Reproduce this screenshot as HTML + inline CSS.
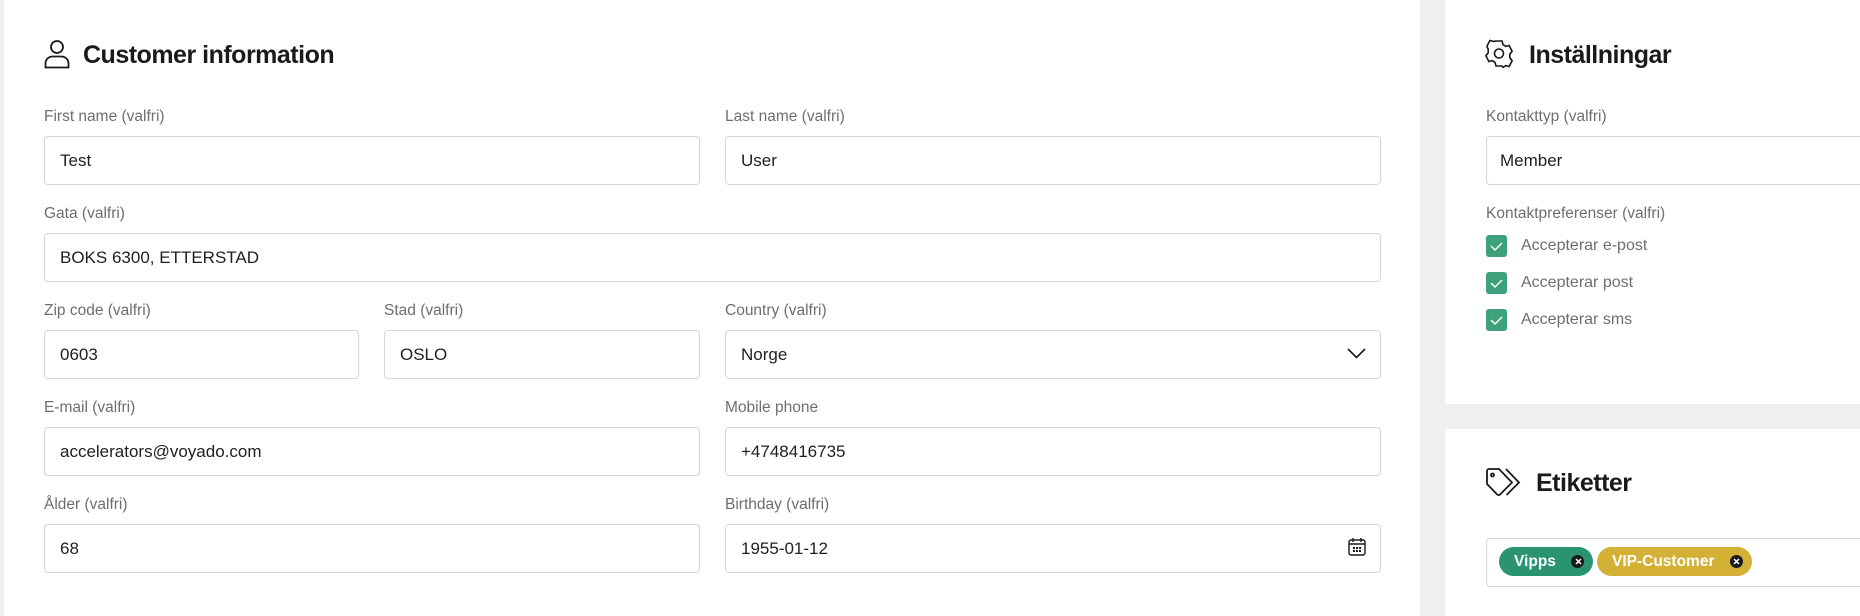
<!DOCTYPE html>
<html><head><meta charset="utf-8"><style>
*{box-sizing:border-box;margin:0;padding:0}
body{width:1860px;height:616px;background:#efefef;font-family:"Liberation Sans",sans-serif;position:relative;overflow:hidden;color:#1f1f1f}
.panel{position:absolute;background:#fff}
.abs{position:absolute}
.lbl{position:absolute;font-size:15.5px;color:#6e6e6e;line-height:18px}
.inp{position:absolute;height:49px;border:1px solid #d6d6d6;border-radius:4px;background:#fff;font-size:17px;line-height:47px;padding-left:15px;color:#1f1f1f}
.title{position:absolute;font-size:25px;font-weight:bold;letter-spacing:-0.5px;line-height:30px;color:#1a1a1a}
.cb{position:absolute;width:21px;height:22px;border-radius:3px;background:#3fa07c}
.cbt{position:absolute;font-size:16px;color:#6e6e6e;line-height:18px}
.tag{position:absolute;height:29px;border-radius:15px;color:#fff;font-weight:bold;font-size:15.5px;line-height:29px;padding-left:15px}
.x{position:absolute;right:9px;top:8px;width:13px;height:13px;border-radius:50%;background:#1a1a1a}
</style></head><body>
<div class="panel" style="left:4px;top:0;width:1416px;height:616px"></div>
<div class="panel" style="left:1445px;top:0;width:415px;height:404px"></div>
<div class="panel" style="left:1445px;top:429px;width:415px;height:187px"></div>

<svg class="abs" style="left:44px;top:40px" width="26" height="29" viewBox="0 0 26 29" fill="none" stroke="#1a1a1a" stroke-width="1.8"><circle cx="13" cy="7" r="6"/><path d="M1.5 27.5v-4a7 7 0 0 1 7-7h9a7 7 0 0 1 7 7v4z"/></svg>
<div class="title" style="left:83px;top:40px">Customer information</div>

<div class="lbl" style="left:44px;top:108px">First name (valfri)</div>
<div class="inp" style="left:44px;top:136px;width:656px">Test</div>
<div class="lbl" style="left:725px;top:108px">Last name (valfri)</div>
<div class="inp" style="left:725px;top:136px;width:656px">User</div>

<div class="lbl" style="left:44px;top:205px">Gata (valfri)</div>
<div class="inp" style="left:44px;top:233px;width:1337px">BOKS 6300, ETTERSTAD</div>

<div class="lbl" style="left:44px;top:302px">Zip code (valfri)</div>
<div class="inp" style="left:44px;top:330px;width:315px">0603</div>
<div class="lbl" style="left:384px;top:302px">Stad (valfri)</div>
<div class="inp" style="left:384px;top:330px;width:316px">OSLO</div>
<div class="lbl" style="left:725px;top:302px">Country (valfri)</div>
<div class="inp" style="left:725px;top:330px;width:656px">Norge</div>
<svg class="abs" style="left:1347px;top:348px" width="19" height="11" viewBox="0 0 19 11" fill="none" stroke="#1a1a1a" stroke-width="1.6"><path d="M1 1l8.5 8.5L18 1"/></svg>

<div class="lbl" style="left:44px;top:399px">E-mail (valfri)</div>
<div class="inp" style="left:44px;top:427px;width:656px">accelerators@voyado.com</div>
<div class="lbl" style="left:725px;top:399px">Mobile phone</div>
<div class="inp" style="left:725px;top:427px;width:656px">+4748416735</div>

<div class="lbl" style="left:44px;top:496px">Ålder (valfri)</div>
<div class="inp" style="left:44px;top:524px;width:656px">68</div>
<div class="lbl" style="left:725px;top:496px">Birthday (valfri)</div>
<div class="inp" style="left:725px;top:524px;width:656px">1955-01-12</div>
<svg class="abs" style="left:1348px;top:537px" width="18" height="19" viewBox="0 0 18 19" fill="none" stroke="#1a1a1a" stroke-width="1.4"><rect x="1" y="3" width="16" height="15" rx="2"/><path d="M1 7h16M5 1v4M13 1v4"/><g fill="#1a1a1a" stroke="none"><rect x="5" y="10" width="2" height="2"/><rect x="8" y="10" width="2" height="2"/><rect x="11" y="10" width="2" height="2"/><rect x="5" y="13" width="2" height="2"/><rect x="8" y="13" width="2" height="2"/><rect x="11" y="13" width="2" height="2"/></g></svg>

<svg class="abs" style="left:1485px;top:39px" width="28" height="29" viewBox="0 0 28 29" fill="none" stroke="#1a1a1a" stroke-width="1.6"><path d="M11 2h6l1 3.6 2.8 1.8 3.3-.9 3 5.8-2.3 2.9v3.6l2.3 2.9-3 5.8-3.3-.9-2.8 1.8L17 27h-6l-1-3.6-2.8-1.8-3.3.9-3-5.8 2.3-2.9v-3.6L1.9 7.3l3-5.8 3.3.9L11 2z"/><circle cx="14" cy="14.5" r="4.5"/></svg>
<div class="title" style="left:1529px;top:40px">Inställningar</div>

<div class="lbl" style="left:1486px;top:108px">Kontakttyp (valfri)</div>
<div class="inp" style="left:1486px;top:136px;width:400px;padding-left:13px">Member</div>
<div class="lbl" style="left:1486px;top:205px">Kontaktpreferenser (valfri)</div>
<div class="cb" style="left:1486px;top:235px"></div><div class="cbt" style="left:1521px;top:237px">Accepterar e-post</div>
<div class="cb" style="left:1486px;top:272px"></div><div class="cbt" style="left:1521px;top:274px">Accepterar post</div>
<div class="cb" style="left:1486px;top:309px"></div><div class="cbt" style="left:1521px;top:311px">Accepterar sms</div>
<svg class="abs" style="left:1486px;top:235px" width="21" height="96" viewBox="0 0 21 96" fill="none" stroke="#fff" stroke-width="1.5"><path d="M5 11l4 4 7-7M5 48l4 4 7-7M5 85l4 4 7-7"/></svg>

<svg class="abs" style="left:1485px;top:468px" width="37" height="30" viewBox="0 0 37 30" fill="none" stroke="#1a1a1a" stroke-width="1.8"><path d="M2 3a2 2 0 0 1 2-2h10l13 13.5-12 12a2 2 0 0 1-2.8 0L2 16z"/><circle cx="7.5" cy="7" r="1.5"/><path d="M21 1l13 13.5-12.5 12.5"/></svg>
<div class="title" style="left:1536px;top:468px">Etiketter</div>
<div class="inp" style="left:1486px;top:538px;width:400px;height:49px"></div>
<div class="tag" style="left:1499px;top:547px;width:94px;background:#2a9472">Vipps<div class="x"></div></div>
<div class="tag" style="left:1597px;top:547px;width:155px;background:#d4b035">VIP-Customer<div class="x"></div></div>
<svg class="abs" style="left:1572px;top:555px" width="170" height="13" viewBox="0 0 170 13" stroke="#fff" stroke-width="1.5"><path d="M4 4l5 5M9 4l-5 5M162 4l5 5M167 4l-5 5"/></svg>
</body></html>
